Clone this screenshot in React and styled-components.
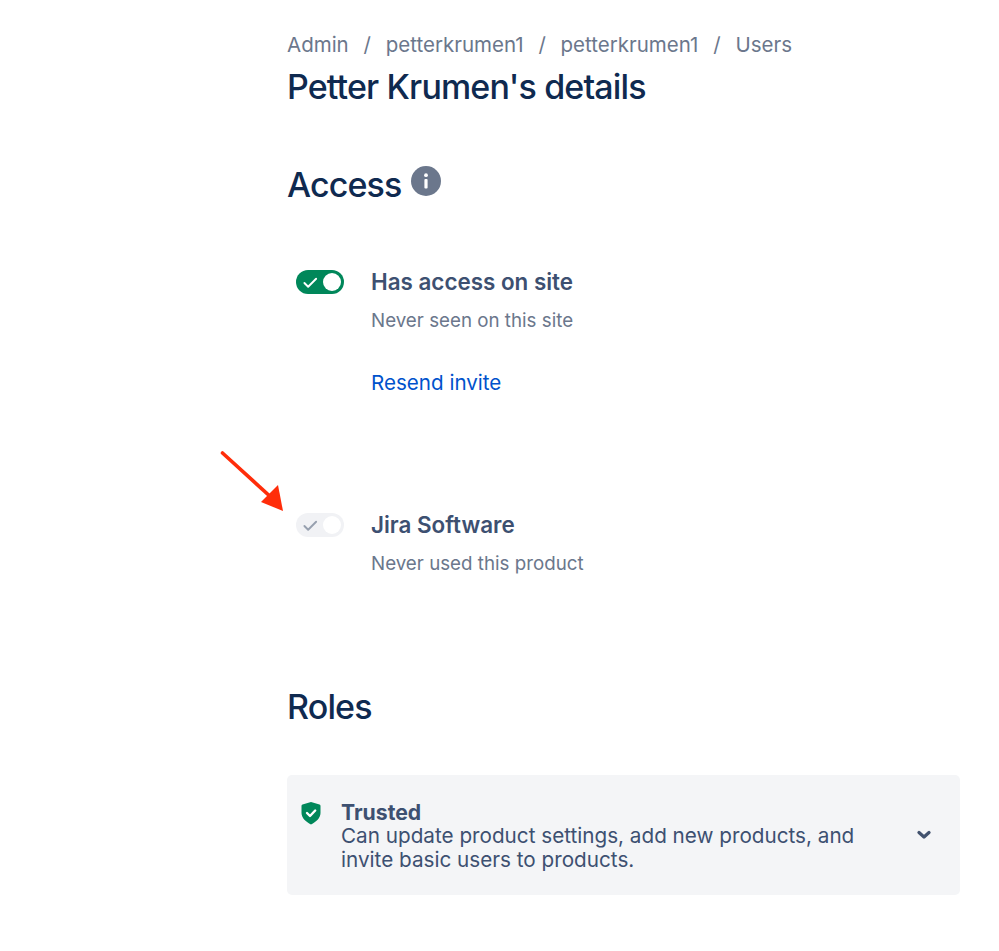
import React from "react";
import styled, { createGlobalStyle } from "styled-components";

const Global = createGlobalStyle`
  html, body { margin: 0; background: #fff; }
  body { font-family: Inter, "Noto Sans", sans-serif; -webkit-font-smoothing: antialiased; }
`;
const Page = styled.main`
  position: relative;
  box-sizing: border-box;
  width: 999px;
  height: 951px;
  padding: 30px 39px 0 287px;
  overflow: hidden;
`;
const Crumbs = styled.nav`
  display: flex;
  gap: 14.8px;
  height: 28px;
  align-items: center;
  font-size: 20.5px;
  color: #6b778c;
`;
const Title = styled.h1`
  margin: 7px 0 0;
  font-size: 34px;
  line-height: 44px;
  font-weight: 550;
  letter-spacing: -0.86px;
  color: #0f2a50;
`;
const SectionHead = styled.div`
  display: flex;
  align-items: flex-start;
  gap: 9px;
  margin-top: ${p => p.$top}px;
`;
const H2 = styled.h2`
  margin: 0;
  font-size: 34px;
  line-height: 44px;
  font-weight: 550;
  letter-spacing: -0.86px;
  color: #0f2a50;
`;
const InfoDot = styled.span`
  display: flex;
  width: 30px;
  height: 30px;
  margin-top: 3px;
`;
const Row = styled.section`
  display: flex;
  align-items: flex-start;
  gap: 27px;
  padding-left: 9px;
  margin-top: ${p => p.$top}px;
`;
const Toggle = styled.span`
  position: relative;
  flex: none;
  width: 48px;
  height: 24px;
  margin-top: 4px;
  border-radius: 12px;
  background: ${p => (p.$on ? "#00875a" : "#f1f2f5")};
  color: ${p => (p.$on ? "#fff" : "#97a0af")};
  display: flex;
  align-items: center;
  padding-left: 7px;
  box-sizing: border-box;
`;
const Knob = styled.span`
  position: absolute;
  right: 3px;
  top: 3px;
  width: 18px;
  height: 18px;
  border-radius: 50%;
  background: #fff;
`;
const RowBody = styled.div`
  display: flex;
  flex-direction: column;
`;
const RowTitle = styled.div`
  font-size: 22.4px;
  line-height: 32px;
  font-weight: 560;
  color: #3d5071;
`;
const RowSub = styled.div`
  margin-top: 11px;
  font-size: 18.75px;
  line-height: 24px;
  color: #6b778c;
`;
const Link = styled.a`
  margin-top: 38px;
  font-size: 20.6px;
  line-height: 24px;
  color: #0052cc;
`;
const Card = styled.div`
  display: flex;
  align-items: flex-start;
  box-sizing: border-box;
  width: 673px;
  height: 120px;
  margin-top: 46px;
  padding: 25px 29px 0 14px;
  background: #f4f5f7;
  border-radius: 5px;
`;
const Shield = styled.span`
  display: flex;
  flex: none;
  width: 20px;
  margin-top: 1px;
  margin-right: 20px;
`;
const CardBody = styled.div`
  flex: 1;
  font-size: 20.7px;
  line-height: 24px;
  color: #3d5071;
`;
const CardTitle = styled.div`
  font-weight: 680;
  font-size: 21.2px;
`;
const CardText = styled.div`
  width: 540px;
`;
const Chevron = styled.span`
  display: flex;
  align-self: center;
  margin-top: -25px;
  color: #42526e;
`;
const ArrowMark = styled.svg`
  position: absolute;
  left: 215px;
  top: 445px;
`;

const Check = ({ size = 15 }) => (
  <svg width={size} height={size} viewBox="0 0 16 16" fill="none">
    <path d="M1.5 8.5 L5.5 12.5 L14 4" stroke="currentColor" strokeWidth="2" strokeLinecap="round" strokeLinejoin="round" />
  </svg>
);

export default function App() {
  return (
    <>
      <Global />
      <Page>
        <Crumbs>
          <span>Admin</span><span>/</span>
          <span>petterkrumen1</span><span>/</span>
          <span>petterkrumen1</span><span>/</span>
          <span>Users</span>
        </Crumbs>
        <Title>Petter Krumen's details</Title>
        <SectionHead $top={54}>
          <H2>Access</H2>
          <InfoDot>
            <svg width="30" height="30" viewBox="0 0 30 30">
              <circle cx="15" cy="15" r="15" fill="#6b778c" />
              <rect x="13.4" y="13" width="3.2" height="9.5" rx="1" fill="#fff" />
              <circle cx="15" cy="9.2" r="1.9" fill="#fff" />
            </svg>
          </InfoDot>
        </SectionHead>
        <Row $top={59}>
          <Toggle $on><Check /><Knob /></Toggle>
          <RowBody>
            <RowTitle>Has access on site</RowTitle>
            <RowSub>Never seen on this site</RowSub>
            <Link>Resend invite</Link>
          </RowBody>
        </Row>
        <Row $top={114}>
          <Toggle><Check /><Knob /></Toggle>
          <RowBody>
            <RowTitle>Jira Software</RowTitle>
            <RowSub>Never used this product</RowSub>
          </RowBody>
        </Row>
        <SectionHead $top={109}><H2>Roles</H2></SectionHead>
        <Card>
          <Shield>
            <svg width="20" height="24" viewBox="0 0 20 24">
              <path d="M10 1 L18.5 3.6 C19.2 3.8 19.5 4.3 19.5 5 V12 C19.5 17 15 21 10 23.5 C5 21 .5 17 .5 12 V5 C.5 4.3 .8 3.8 1.5 3.6 Z" fill="#00875a" />
              <path d="M6 12 L9 15 L14.2 9.5" fill="none" stroke="#fff" strokeWidth="2.4" strokeLinecap="round" strokeLinejoin="round" />
            </svg>
          </Shield>
          <CardBody>
            <CardTitle>Trusted</CardTitle>
            <CardText>Can update product settings, add new products, and invite basic users to products.</CardText>
          </CardBody>
          <Chevron>
            <svg width="14" height="10" viewBox="0 0 14 10" fill="none">
              <path d="M2 2.5 L7 7 L12 2.5" stroke="currentColor" strokeWidth="3.2" strokeLinecap="round" strokeLinejoin="round" />
            </svg>
          </Chevron>
        </Card>
        <ArrowMark width="76" height="76" viewBox="0 0 76 76" fill="none">
          <path d="M7.5 8 L58 54" stroke="#ff2d0a" strokeWidth="3.6" strokeLinecap="round" />
          <path d="M68 66 L63 40 L46 57 Z" fill="#ff2d0a" />
        </ArrowMark>
      </Page>
    </>
  );
}
